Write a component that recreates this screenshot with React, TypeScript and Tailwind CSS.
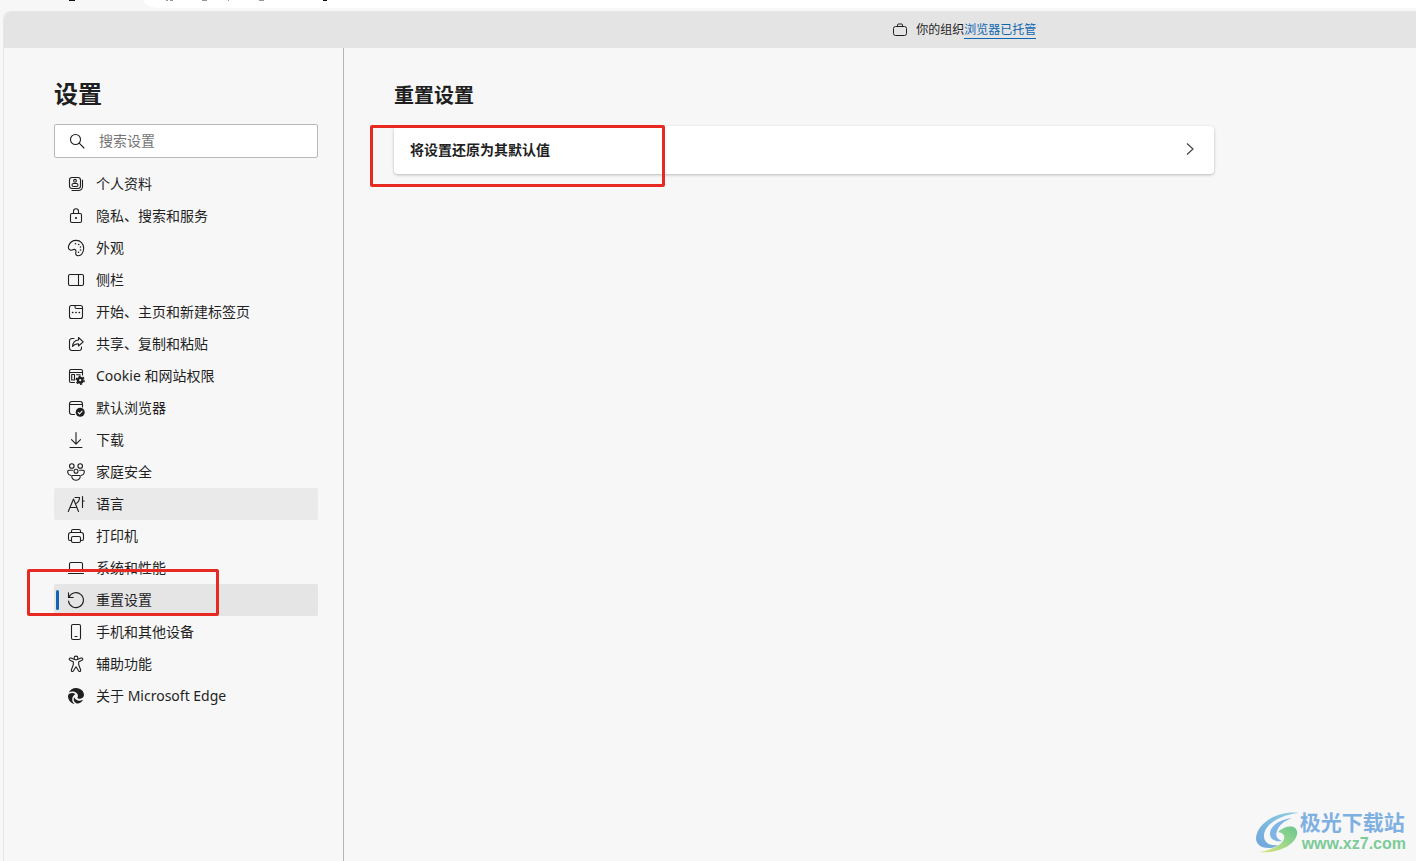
import type { ReactNode } from "react";
import clsx from "clsx";
import { FaEdge } from "react-icons/fa6";

interface NavItem {
  label: string;
  icon: ReactNode;
  state?: "hover" | "active";
}

function Icon({ children }: { children: ReactNode }) {
  return (
    <svg
      viewBox="0 0 20 20"
      className="size-5 shrink-0"
      fill="none"
      stroke="currentColor"
      strokeWidth="1.1"
      strokeLinecap="round"
      strokeLinejoin="round"
      aria-hidden="true"
    >
      {children}
    </svg>
  );
}

const items: NavItem[] = [
  {
    label: "个人资料",
    icon: (
      <Icon>
        <rect x="3.5" y="3.5" width="11" height="11" rx="2.5" />
        <circle cx="9" cy="6.8" r="1.4" />
        <rect x="6" y="9.5" width="6" height="3" rx="1.5" />
        <path d="M16.5 6v6.5a4 4 0 0 1-4 4H6" />
      </Icon>
    ),
  },
  {
    label: "隐私、搜索和服务",
    icon: (
      <Icon>
        <rect x="4.5" y="7.5" width="11" height="9" rx="1.5" />
        <path d="M7.5 7.5V5.2a2.5 2.5 0 0 1 5 0v2.3" />
        <circle cx="10" cy="12" r="0.5" fill="currentColor" />
      </Icon>
    ),
  },
  {
    label: "外观",
    icon: (
      <Icon>
        <path d="M2.6 8C3.800 4.600 6.800 2.400 10.300 2.400c4.100 0 7.400 3.300 7.400 7.600s-2.300 7.700-5.400 7.700c-2 0-2.900-1.300-2.500-3.100.5-2-.2-3.200-1.600-3.200-1.300 0-1.800 1-3.300.8C2.700 12 2 9.800 2.600 8z" />
        <g fill="currentColor" stroke="none">
          <circle cx="9.5" cy="5.800" r="0.8" />
          <circle cx="12.700" cy="6.500" r="0.8" />
          <circle cx="14.500" cy="9" r="0.8" />
          <circle cx="14.500" cy="12" r="0.8" />
          <circle cx="12.500" cy="14.300" r="0.8" />
        </g>
      </Icon>
    ),
  },
  {
    label: "侧栏",
    icon: (
      <Icon>
        <rect x="2.5" y="4.5" width="15" height="11" rx="1.5" />
        <path d="M12.500 4.500v11" />
      </Icon>
    ),
  },
  {
    label: "开始、主页和新建标签页",
    icon: (
      <Icon>
        <rect x="3.5" y="3.5" width="13" height="13" rx="2" />
        <path d="M9 3.500V5a1.500 1.500 0 0 0 1.500 1.500h6" />
        <path d="M6.500 10.500h.4M9.800 10.500h.4M13.100 10.500h.4" strokeWidth="1.400" />
      </Icon>
    ),
  },
  {
    label: "共享、复制和粘贴",
    icon: (
      <Icon>
        <path d="M8 4.500H6A2.500 2.500 0 0 0 3.500 7v7A2.500 2.500 0 0 0 6 16.500h7a2.500 2.500 0 0 0 2.500-2.500v-1" />
        <path d="M12.500 3.500l4.700 4.300-4.700 4.200V9.700c-2.700 0-4.500.7-6 2.800.3-3.700 2.300-6.200 6-6.500z" />
      </Icon>
    ),
  },
  {
    label: "Cookie 和网站权限",
    icon: (
      <Icon>
        <path d="M8.500 16.500H5A1.500 1.500 0 0 1 3.500 15V5A1.500 1.500 0 0 1 5 3.500h10A1.500 1.500 0 0 1 16.500 5v4M3.500 6.500h13" />
        <path d="M5.700 8.500h2.800v5.500H5.700zM10.500 8.700h3.500" />
        <circle cx="14.200" cy="14.200" r="2.300" strokeWidth="2.400" />
        <circle
          cx="14.200"
          cy="14.200"
          r="4"
          strokeWidth="1.400"
          strokeDasharray="2.100 2.090"
          strokeLinecap="butt"
        />
      </Icon>
    ),
  },
  {
    label: "默认浏览器",
    icon: (
      <Icon>
        <path d="M8.500 16.500H6A2.500 2.500 0 0 1 3.500 14V6A2.500 2.500 0 0 1 6 3.500h8A2.500 2.500 0 0 1 16.500 6v3M3.500 6.500h13" />
        <circle cx="14.200" cy="14.300" r="4.500" fill="currentColor" stroke="none" />
        <path d="M12.300 14.500l1.300 1.300 2.500-2.700" stroke="#f7f7f7" />
      </Icon>
    ),
  },
  {
    label: "下载",
    icon: (
      <Icon>
        <path d="M10 2.500v11.500M5.500 9.700l4.500 4.500 4.500-4.500M4 17.500h12" />
      </Icon>
    ),
  },
  {
    label: "家庭安全",
    icon: (
      <Icon>
        <circle cx="5.800" cy="4" r="2.300" />
        <circle cx="14.200" cy="4" r="2.300" />
        <circle cx="10" cy="9.300" r="2" />
        <path d="M6.500 8.300H3C.8 8.300 1.200 13 5 13.500M13.500 8.300H17c2.200 0 1.800 4.700-2 5.200" />
        <path d="M6.300 13.500h7.400c1 0 .8 4.700-3.700 4.700s-4.700-4.700-3.700-4.700z" />
      </Icon>
    ),
  },
  {
    label: "语言",
    state: "hover",
    icon: (
      <Icon>
        <path d="M2.300 17.500L7.500 5l5 12.500M4 13.500h7M9 3.500h4.500c0 3-1.300 4.700-3.300 5.900M16.500 2.500v11M16.500 7h1.700" />
      </Icon>
    ),
  },
  {
    label: "打印机",
    icon: (
      <Icon>
        <path d="M5.500 6.500V5A1.500 1.500 0 0 1 7 3.500h6A1.500 1.500 0 0 1 14.500 5v1.500" />
        <path d="M5.500 14.500H4A1.500 1.500 0 0 1 2.500 13V9A2.500 2.500 0 0 1 5 6.500h10A2.500 2.500 0 0 1 17.500 9v4a1.500 1.500 0 0 1-1.500 1.500h-1.500" />
        <rect x="5.500" y="10.500" width="9" height="6" rx="1.500" />
      </Icon>
    ),
  },
  {
    label: "系统和性能",
    icon: (
      <Icon>
        <path d="M3.500 12.500V6A1.500 1.500 0 0 1 5 4.500h10A1.500 1.500 0 0 1 16.500 6v6.500zM2.500 15.500h15" />
      </Icon>
    ),
  },
  {
    label: "重置设置",
    state: "active",
    icon: (
      <Icon>
        <path d="M2.500 2.800v4.700h4.700" />
        <path d="M3 7.300A7.500 7.500 0 1 1 2.500 11" />
      </Icon>
    ),
  },
  {
    label: "手机和其他设备",
    icon: (
      <Icon>
        <rect x="5.500" y="2.500" width="9" height="15" rx="1.500" />
        <path d="M9 14.500h2" />
      </Icon>
    ),
  },
  {
    label: "辅助功能",
    icon: (
      <Icon>
        <circle cx="10" cy="4" r="1.900" />
        <path d="M8 5.300L5 4.100c-1.700-.6-2.500 1.500-1 2.200l3.300 1.500v3l-1.900 5c-.5 1.600 1.400 2.400 2.100 1L10 12.800l2.500 4c.7 1.400 2.600.6 2.100-1l-1.900-5v-3L16 6.300c1.500-.7.7-2.800-1-2.200l-3 1.200" />
      </Icon>
    ),
  },
  {
    label: "关于 Microsoft Edge",
    icon: (
      <span className="flex size-5 shrink-0 items-center justify-center">
        <FaEdge className="size-4" aria-hidden="true" />
      </span>
    ),
  },
];

function BrowserStrip() {
  return (
    <div className="flex h-[11px] items-start">
      <svg viewBox="0 0 144 8" className="h-2 w-36 shrink-0" aria-hidden="true">
        <path d="M69 0h6v1h-6z" fill="#111" />
      </svg>
      <div className="h-2 flex-1 rounded-bl-[16px_8px] bg-white">
        <svg viewBox="0 0 200 8" className="h-2 w-50" aria-hidden="true">
          <path
            d="M22 0h2v1h-2zM26 0h3v1h-3zM58 0h5v1h-5zM84 0h1v1h-1zM115 0h5v1h-5z"
            fill="#999"
          />
          <path d="M179 0h4v1h-4z" fill="#111" />
        </svg>
      </div>
    </div>
  );
}

function ManagedBanner() {
  return (
    <div className="flex h-9 items-center gap-2 rounded-tl-lg bg-[#e4e4e4] pl-[62.9%] text-xs">
      <svg
        viewBox="0 0 16 16"
        className="size-4 shrink-0"
        fill="none"
        stroke="currentColor"
        aria-hidden="true"
      >
        <rect x="1.500" y="4.500" width="13" height="9" rx="2" />
        <path d="M5.500 4.500V3a1 1 0 0 1 1-1h3a1 1 0 0 1 1 1v1.500" />
      </svg>
      <p>
        你的组织
        <a href="#managed" className="border-b border-[#1067b0] text-[#1067b0]">
          浏览器已托管
        </a>
      </p>
    </div>
  );
}

function Sidebar() {
  return (
    <aside className="w-[340px] shrink-0 border-r border-[#b5b5b5] pt-8 pr-[25px] pl-[50px]">
      <h1 className="text-2xl leading-7 font-bold">设置</h1>
      <label className="mt-4 flex h-[34px] items-center gap-3 rounded-xs border border-[#b8b8b8] bg-white pl-3">
        <Icon>
          <circle cx="8.500" cy="8.500" r="5" />
          <path d="M12.200 12.200l4.800 4.800" />
        </Icon>
        <input
          type="search"
          placeholder="搜索设置"
          aria-label="搜索设置"
          className="w-full bg-transparent text-sm outline-none placeholder:text-[#757575]"
        />
      </label>
      <nav className="mt-2.5">
        <ul>
          {items.map((item) => (
            <li key={item.label} className="relative">
              <a
                href={"#" + item.label}
                className={clsx(
                  "flex h-8 items-center gap-2.5 rounded-xs pl-3 text-sm",
                  item.state === "hover" && "bg-[#eaeaea]",
                  item.state === "active" && "bg-[#e5e5e5]",
                )}
              >
                {item.icon}
                {item.label}
              </a>
              {item.state === "active" && (
                <>
                  <span className="absolute top-1.5 left-0.5 h-5 w-[3px] rounded-full bg-[#1067b0]" />
                  <span className="pointer-events-none absolute -top-[15px] -left-[27px] h-[47px] w-[192px] rounded-xs border-3 border-[#e62a22]" />
                </>
              )}
            </li>
          ))}
        </ul>
      </nav>
    </aside>
  );
}

function ResetSettings() {
  return (
    <main className="flex-1 px-[50px] pt-8">
      <h2 className="text-xl leading-8 font-bold">重置设置</h2>
      <div className="relative mt-3.5 max-w-[820px]">
        <button
          type="button"
          className="flex h-12 w-full items-center justify-between rounded bg-white px-4 text-left text-sm font-semibold shadow-[0_1px_3px_rgba(0,0,0,0.25)]"
        >
          将设置还原为其默认值
          <svg
            viewBox="0 0 16 16"
            className="size-4"
            fill="none"
            stroke="#444"
            strokeWidth="1.200"
            aria-hidden="true"
          >
            <path d="M5 1.500l6 5.500-6 5.500" />
          </svg>
        </button>
        <span className="pointer-events-none absolute -top-px -left-6 h-[62px] w-[295px] rounded-xs border-3 border-[#e62a22]" />
      </div>
    </main>
  );
}

function Watermark() {
  return (
    <div className="absolute right-2.5 bottom-1.5 flex items-center">
      <svg viewBox="0 0 46 46" className="size-[46px]" aria-hidden="true">
        <defs>
          <linearGradient id="leaf" x1="0" y1="1" x2="1" y2="0">
            <stop offset="0" stopColor="#dfe67c" />
            <stop offset="0.600" stopColor="#8fd48c" />
            <stop offset="1" stopColor="#6cc592" />
          </linearGradient>
          <linearGradient id="wave" x1="0" y1="1" x2="1" y2="0">
            <stop offset="0" stopColor="#6ea4dc" />
            <stop offset="1" stopColor="#8ed0e0" />
          </linearGradient>
        </defs>
        <path
          d="M45 4C26 1 3 13 2 29c0 7 6 10 13 10 4 0 7-1 9-3-8 1-14-2-14-9C10 16 25 6 45 4z"
          fill="url(#wave)"
        />
        <path
          d="M38 9c-14 2-23 9-22 17 1 5 6 7 12 6-5-2-7-5-5-10 2-6 7-10 15-13z"
          fill="#7fb4e4"
        />
        <path
          d="M24 23c5-5 13-7 17-4 6 5-1 16-11 20-8 4-18 5-25 4 13-2 23-7 25-13 1-4-1-6-6-7z"
          fill="url(#leaf)"
        />
      </svg>
      <p className="text-[21px] leading-6 font-bold text-[#7fb0e2]">
        极光下载站
        <span className="block pl-0.5 font-['Liberation_Sans'] text-base leading-5 text-[#7ccb98]">
          www.xz7.com
        </span>
      </p>
    </div>
  );
}

export default function App() {
  return (
    <div className="relative flex min-h-screen flex-col overflow-hidden bg-[#f7f7f7] font-['Noto_Sans','Noto_Sans_CJK_SC',sans-serif] text-[#1f1f1f]">
      <BrowserStrip />
      <div className="ml-[3px] flex flex-1 flex-col rounded-tl-lg border-t border-l border-[#e6e6e6]">
        <ManagedBanner />
        <div className="flex flex-1">
          <Sidebar />
          <ResetSettings />
        </div>
      </div>
      <Watermark />
    </div>
  );
}
